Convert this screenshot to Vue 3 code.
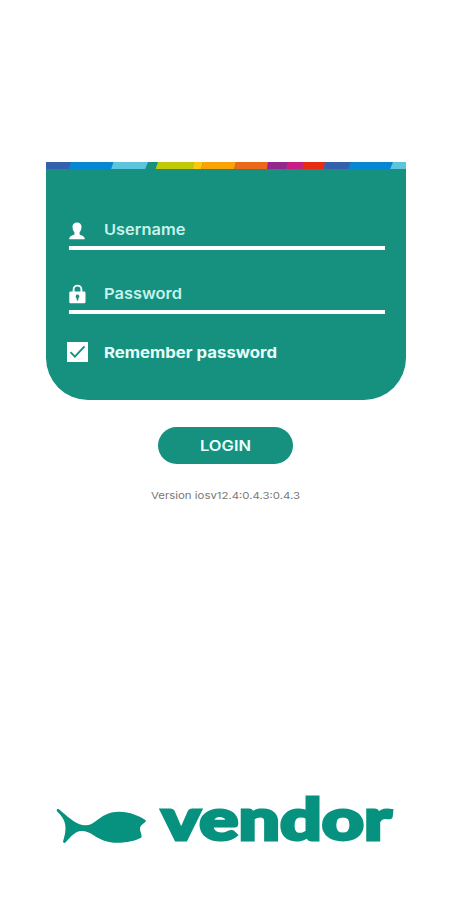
<script setup>
import { ref } from 'vue'

const remember = ref(true)

const stripes = [
  { color: '#3560ad', points: '0,0 25,0 23,8 0,8' },
  { color: '#0786d3', points: '25,0 67.5,0 65,8 23,8' },
  { color: '#5cc4dd', points: '67.5,0 102,0 99,8 65,8' },
  { color: '#c0ca08', points: '112,0 148,0 146,8 109.5,8' },
  { color: '#fdc70c', points: '148,0 157,0 155,8 146,8' },
  { color: '#faa307', points: '157,0 190,0 188,8 155,8' },
  { color: '#ec691b', points: '190,0 222,0 221,8 188,8' },
  { color: '#91278f', points: '222,0 242,0 240,8 221,8' },
  { color: '#ca1d86', points: '242,0 258,0 256,8 240,8' },
  { color: '#e62d13', points: '258,0 279,0 278,8 256,8' },
  { color: '#3560ad', points: '279,0 304.5,0 302.5,8 278,8' },
  { color: '#0786d3', points: '304.5,0 347,0 344,8 302.5,8' },
  { color: '#5cc4dd', points: '347,0 360,0 360,8 344,8' },
]
</script>

<template>
  <main class="screen">
    <section class="card">
      <svg class="stripe" viewBox="0 0 360 8" preserveAspectRatio="none">
        <polygon v-for="(s, i) in stripes" :key="i" :points="s.points" :fill="s.color" />
      </svg>

      <div class="field user">
        <svg class="icon" viewBox="0 0 16 18">
          <path d="M8 .4c2.800 0 4.500 1.800 4.500 4.400 0 2.300-.8 4.300-1.900 5.500v1.900c.5 1.200 5.100 1 5.300 5H.1c.2-4 4.800-3.800 5.300-5v-1.900C4.300 9.100 3.500 7.100 3.500 4.800 3.500 2.200 5.200.4 8 .4z" fill="#fff" />
        </svg>
        <svg class="label" width="90" height="24">
          <text x="0" y="17" textLength="81.500" lengthAdjust="spacingAndGlyphs">Username</text>
        </svg>
      </div>

      <div class="field pass">
        <svg class="icon lock" viewBox="0 0 17 20">
          <path d="M4.600 8.500V5.500a3.900 3.900 0 0 1 7.800 0v3" fill="none" stroke="#fff" stroke-width="1.900" />
          <rect x=".3" y="7.500" width="16.200" height="11.800" rx="1.200" fill="#fff" />
          <path d="M8.500 10.500a1.900 1.900 0 0 1 1 3.500l-.3 2.500H7.800l-.3-2.500a1.900 1.900 0 0 1 1-3.500z" fill="#169180" />
        </svg>
        <svg class="label" width="90" height="24">
          <text x="0" y="17" textLength="78" lengthAdjust="spacingAndGlyphs">Password</text>
        </svg>
      </div>

      <div class="remember" @click="remember = !remember">
        <svg class="box" viewBox="0 0 21 20">
          <rect width="21" height="20" fill="#fff" />
          <path v-if="remember" d="M3.500 10.100l4.400 4.500 9.600-10.200" fill="none" stroke="#169180" stroke-width="1.900" />
        </svg>
        <svg class="label strong" width="180" height="24">
          <text x="0" y="18" textLength="173" lengthAdjust="spacingAndGlyphs">Remember password</text>
        </svg>
      </div>
    </section>

    <button class="login">
      <svg width="54" height="20">
        <text x="1" y="15.500" textLength="51" lengthAdjust="spacingAndGlyphs">LOGIN</text>
      </svg>
    </button>

    <svg class="version" width="152" height="16">
      <text x="2" y="12" textLength="149" lengthAdjust="spacingAndGlyphs">Version iosv12.4:0.4.3:0.4.3</text>
    </svg>

    <footer class="brand">
      <svg class="fish" viewBox="0 0 90 38">
        <path d="M.8 3.500C.4 2.300 2 1.500 3.200 2.500 10 8.200 18.500 16.500 26.500 18c5.500 1 9-.5 13.500-4C46 9.400 52 4.800 63 4.700c11 0 20.500 4.300 26.300 8.200.8.600.8 1.300.2 1.900-2 1.800-5.500 3.800-5.500 7 0 3 1.800 4.800 1.500 7.600-.1 1-.5 1.500-1.500 1.900C79.500 33.500 71 35.800 62 35.800 51 35.800 44 32.500 38 28.500c-4.500-3-7.500-4.500-12.500-4.500-6.500 0-11 6-15.500 11-1.500 1.700-3.400 1.100-2.800-1.200C8.500 29 10 25 9.300 18.500 8.400 11.500 4.500 8 1.500 4.800.9 4.200.9 4 .8 3.500z" fill="#07917f" />
      </svg>
      <svg class="wordmark" width="240" height="80">
        <text x="2.500" y="60" textLength="230" lengthAdjust="spacingAndGlyphs">vendor</text>
      </svg>
    </footer>
  </main>
</template>

<style>
body {
  margin: 0;
  background: #fff;
}
</style>

<style scoped>
.screen {
  box-sizing: border-box;
  width: 450px;
  height: 900px;
  padding-top: 161.500px;
  display: flex;
  flex-direction: column;
  align-items: center;
  background: #fff;
  font-family: Inter, "Liberation Sans", sans-serif;
  overflow: hidden;
}
svg {
  display: block;
  flex: none;
}
.card {
  box-sizing: border-box;
  width: 360px;
  height: 238.500px;
  margin-left: 1px;
  flex: none;
  background: #169180;
  border-radius: 0 0 42px 42px;
}
.stripe {
  width: 360px;
  height: 7.500px;
}
.field {
  box-sizing: border-box;
  width: 316px;
  height: 34px;
  margin-left: 23px;
  border-bottom: 4px solid #fff;
  display: flex;
  align-items: flex-start;
}
.user {
  margin-top: 47px;
}
.pass {
  margin-top: 30px;
}
.icon {
  width: 16px;
  height: 18px;
  margin: 6px 19px 0 0;
}
.lock {
  width: 17px;
  height: 20px;
  margin: 4px 18px 0 0;
}
.label {
  margin-top: 2px;
  font-size: 15px;
  font-weight: 560;
  fill: #c6f3eb;
}
.remember {
  margin: 26px 0 0 21px;
  display: flex;
  align-items: center;
  cursor: pointer;
}
.box {
  width: 21px;
  height: 20px;
  margin-right: 16.500px;
}
.strong {
  margin-top: 0;
  font-size: 15px;
  font-weight: 650;
  fill: #e6fffb;
}
.login {
  width: 135px;
  height: 37px;
  margin: 26.500px 0 0 1px;
  padding: 0;
  border: 0;
  border-radius: 19px;
  background: #169180;
  display: flex;
  align-items: center;
  justify-content: center;
  flex: none;
  font-family: inherit;
  font-size: 14.500px;
  font-weight: 600;
  fill: #eafffb;
}
.version {
  margin-top: 23px;
  font-size: 9.500px;
  fill: #777;
}
.brand {
  display: flex;
  align-items: flex-start;
  width: 338px;
  margin-top: 277px;
}
.fish {
  width: 90px;
  height: 38px;
  margin-top: 27px;
}
.wordmark {
  margin-left: 13px;
  font-family: Lato, Inter, sans-serif;
  font-size: 57px;
  font-weight: 900;
  fill: #07917f;
  stroke: #07917f;
  stroke-width: 3px;
}
</style>
